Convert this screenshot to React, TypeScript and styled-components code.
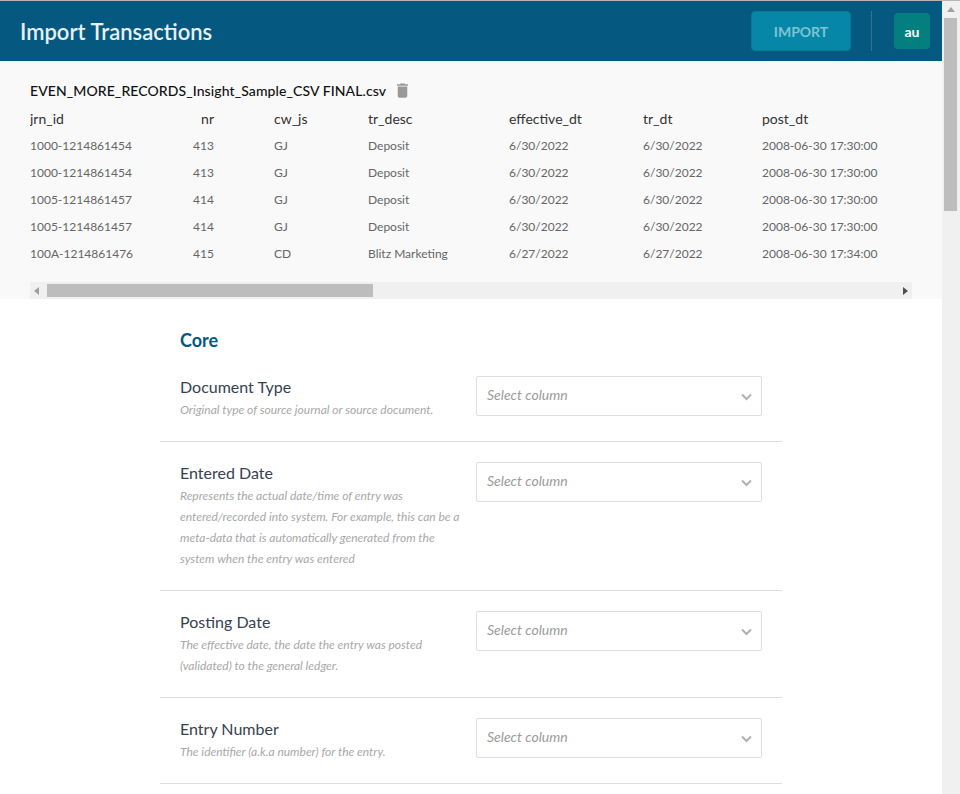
import React from 'react';
import styled, { createGlobalStyle } from 'styled-components';

const GlobalStyle = createGlobalStyle`
  html, body {
    margin: 0;
    padding: 0;
    height: 794px;
    overflow: hidden;
    background: #fff;
    font-family: Lato, "Open Sans", sans-serif;
    text-rendering: optimizeLegibility;
  }
`;

const Window = styled.div`
  display: flex;
  flex-direction: column;
  width: 960px;
  height: 794px;
  overflow: hidden;
`;

const TopEdge = styled.div`
  flex: none;
  height: 1px;
  background: #b5b5b5;
`;

const Body = styled.div`
  display: flex;
  flex: 1;
  min-height: 0;
`;

const Page = styled.div`
  flex: none;
  width: 942px;
  overflow: hidden;
`;

const Header = styled.header`
  display: flex;
  align-items: center;
  height: 60px;
  padding: 0 12px 0 20px;
  box-sizing: border-box;
  background: #05587f;
`;

const Title = styled.h1`
  flex: 1;
  margin: 0;
  font-size: 22px;
  font-weight: 600;
  color: #e6f0f5;
`;

const ImportButton = styled.button`
  width: 100px;
  height: 40px;
  padding: 0;
  border: 1px solid #07799b;
  border-radius: 4px;
  background: #0687a8;
  color: #7fc3d4;
  font-family: inherit;
  font-size: 14px;
  font-weight: 700;
`;

const Divider = styled.div`
  width: 1px;
  height: 40px;
  margin: 0 22px 0 20px;
  background: #2f7596;
`;

const Avatar = styled.div`
  display: flex;
  align-items: center;
  justify-content: center;
  width: 36px;
  height: 36px;
  border-radius: 4px;
  background: #047f80;
  color: #fff;
  font-size: 14px;
  font-weight: 700;
`;

const Preview = styled.section`
  height: 238px;
  padding: 19px 30px 0;
  box-sizing: border-box;
  background: #f9f9f9;
`;

const FileRow = styled.div`
  display: flex;
  align-items: center;
  gap: 7px;
  height: 20px;
  font-size: 14px;
  font-weight: 500;
  letter-spacing: 0.09px;
  color: #111;
`;

const TableClip = styled.div`
  overflow: hidden;
  height: 182px;
`;

const DataTable = styled.table`
  table-layout: fixed;
  width: 882px;
  margin-top: 5px;
  border-collapse: collapse;
`;

const HeadCell = styled.th<{ $right?: boolean; $pad?: boolean }>`
  height: 27px;
  padding: 0 0 0 ${({ $pad }) => ($pad ? '60px' : '0')};
  font-size: 14px;
  font-weight: 400;
  color: #333;
  white-space: nowrap;
  text-align: ${({ $right }) => ($right ? 'right' : 'left')};
`;

const Cell = styled.td<{ $right?: boolean; $pad?: boolean }>`
  height: 27px;
  padding: 0 0 0 ${({ $pad }) => ($pad ? '60px' : '0')};
  font-size: 12px;
  color: #666;
  white-space: nowrap;
  text-align: ${({ $right }) => ($right ? 'right' : 'left')};
`;

const HScroll = styled.div`
  display: flex;
  align-items: center;
  width: 882px;
  height: 17px;
  background: #f0f0f0;
`;

const HThumb = styled.div`
  width: 326px;
  height: 13px;
  margin-left: 4px;
  background: #bdbdbd;
`;

const ArrowBox = styled.div`
  display: flex;
  align-items: center;
  justify-content: center;
  flex: none;
  width: 13px;
  height: 17px;
`;

const Spacer = styled.div`
  flex: 1;
`;

const Form = styled.section`
  width: 622px;
  margin-left: 160px;
`;

const SectionTitle = styled.h2`
  margin: 0;
  padding: 29px 20px 0;
  height: 71px;
  box-sizing: border-box;
  font-size: 18px;
  line-height: 24px;
  font-weight: 700;
  color: #05587f;
`;

const Field = styled.div`
  display: flex;
  gap: 16px;
  padding: 5px 20px 21px;
  border-bottom: 1px solid #dedede;

  & + & {
    padding-top: 19px;
  }
`;

const FieldInfo = styled.div`
  width: 280px;
  flex: none;
`;

const FieldLabel = styled.div`
  font-size: 16px;
  line-height: 24px;
  color: #36424f;
`;

const FieldHint = styled.div`
  font-size: 12px;
  line-height: 21px;
  font-style: italic;
  color: #a8a8a8;
`;

const SelectBox = styled.div`
  display: flex;
  align-items: center;
  justify-content: space-between;
  width: 286px;
  height: 40px;
  margin-top: 1px;
  padding: 0 9px 0 10px;
  box-sizing: border-box;
  border: 1px solid #dedede;
  border-radius: 2px;
  background: #fff;
  font-size: 14px;
  font-style: italic;
  color: #9b9b9b;
`;

const Placeholder = styled.span`
  padding-bottom: 4px;
`;

const ChevronIcon = styled.svg`
  margin-top: 2px;
`;

const VScroll = styled.div`
  display: flex;
  flex-direction: column;
  align-items: center;
  width: 18px;
  padding-right: 1px;
  box-sizing: border-box;
  background: #f0f0f0;
`;

const VThumb = styled.div`
  width: 13px;
  height: 193px;
  background: #bdbdbd;
`;

const TrashIcon = () => (
  <svg width="19" height="19" viewBox="0 0 24 24" fill="#999">
    <path d="M6 19c0 1.1.9 2 2 2h8c1.1 0 2-.9 2-2V7H6v12zM19 4h-3.5l-1-1h-5l-1 1H5v2h14V4z" />
  </svg>
);

const Chevron = () => (
  <ChevronIcon width="11" height="8" viewBox="0 0 11 8" fill="none" stroke="#b0b0b0" strokeWidth="2">
    <path d="M1 1.5l4.5 4.5 4.5-4.5" />
  </ChevronIcon>
);

const columns = [
  { name: 'jrn_id', width: 140 },
  { name: 'nr', width: 44, right: true },
  { name: 'cw_js', width: 154, pad: true },
  { name: 'tr_desc', width: 141 },
  { name: 'effective_dt', width: 134 },
  { name: 'tr_dt', width: 119 },
  { name: 'post_dt', width: 150 },
];

const rows = [
  ['1000-1214861454', '413', 'GJ', 'Deposit', '6/30/2022', '6/30/2022', '2008-06-30 17:30:00'],
  ['1000-1214861454', '413', 'GJ', 'Deposit', '6/30/2022', '6/30/2022', '2008-06-30 17:30:00'],
  ['1005-1214861457', '414', 'GJ', 'Deposit', '6/30/2022', '6/30/2022', '2008-06-30 17:30:00'],
  ['1005-1214861457', '414', 'GJ', 'Deposit', '6/30/2022', '6/30/2022', '2008-06-30 17:30:00'],
  ['100A-1214861476', '415', 'CD', 'Blitz Marketing', '6/27/2022', '6/27/2022', '2008-06-30 17:34:00'],
];

const fields = [
  { label: 'Document Type', hint: ['Original type of source journal or source document.'] },
  {
    label: 'Entered Date',
    hint: [
      'Represents the actual date/time of entry was',
      'entered/recorded into system. For example, this can be a',
      'meta-data that is automatically generated from the',
      'system when the entry was entered',
    ],
  },
  {
    label: 'Posting Date',
    hint: ['The effective date, the date the entry was posted', '(validated) to the general ledger.'],
  },
  { label: 'Entry Number', hint: ['The identifier (a.k.a number) for the entry.'] },
];

const App: React.FC = () => {
  return (
    <Window>
      <GlobalStyle />
      <TopEdge />
      <Body>
        <Page>
          <Header>
            <Title>Import Transactions</Title>
            <ImportButton>IMPORT</ImportButton>
            <Divider />
            <Avatar>au</Avatar>
          </Header>
          <Preview>
            <FileRow>
              EVEN_MORE_RECORDS_Insight_Sample_CSV FINAL.csv
              <TrashIcon />
            </FileRow>
            <TableClip>
              <DataTable>
                <colgroup>
                  {columns.map((col) => (
                    <col key={col.name} style={{ width: col.width }} />
                  ))}
                </colgroup>
                <thead>
                  <tr>
                    {columns.map((col) => (
                      <HeadCell key={col.name} $right={col.right} $pad={col.pad}>
                        {col.name}
                      </HeadCell>
                    ))}
                  </tr>
                </thead>
                <tbody>
                  {rows.map((row, r) => (
                    <tr key={r}>
                      {row.map((value, c) => (
                        <Cell key={c} $right={columns[c].right} $pad={columns[c].pad}>
                          {value}
                        </Cell>
                      ))}
                    </tr>
                  ))}
                </tbody>
              </DataTable>
            </TableClip>
            <HScroll>
              <ArrowBox>
                <svg width="5" height="8" viewBox="0 0 5 8"><path d="M5 0v8L0 4z" fill="#a0a0a0" /></svg>
              </ArrowBox>
              <HThumb />
              <Spacer />
              <ArrowBox>
                <svg width="5" height="8" viewBox="0 0 5 8"><path d="M0 0v8l5-4z" fill="#505050" /></svg>
              </ArrowBox>
            </HScroll>
          </Preview>
          <Form>
            <SectionTitle>Core</SectionTitle>
            {fields.map((field) => (
              <Field key={field.label}>
                <FieldInfo>
                  <FieldLabel>{field.label}</FieldLabel>
                  <FieldHint>
                    {field.hint.map((line) => (
                      <div key={line}>{line}</div>
                    ))}
                  </FieldHint>
                </FieldInfo>
                <SelectBox>
                  <Placeholder>Select column</Placeholder>
                  <Chevron />
                </SelectBox>
              </Field>
            ))}
          </Form>
        </Page>
        <VScroll>
          <ArrowBox>
            <svg width="8" height="5" viewBox="0 0 8 5"><path d="M0 5h8L4 0z" fill="#a0a0a0" /></svg>
          </ArrowBox>
          <VThumb />
        </VScroll>
      </Body>
    </Window>
  );
};

export default App;
